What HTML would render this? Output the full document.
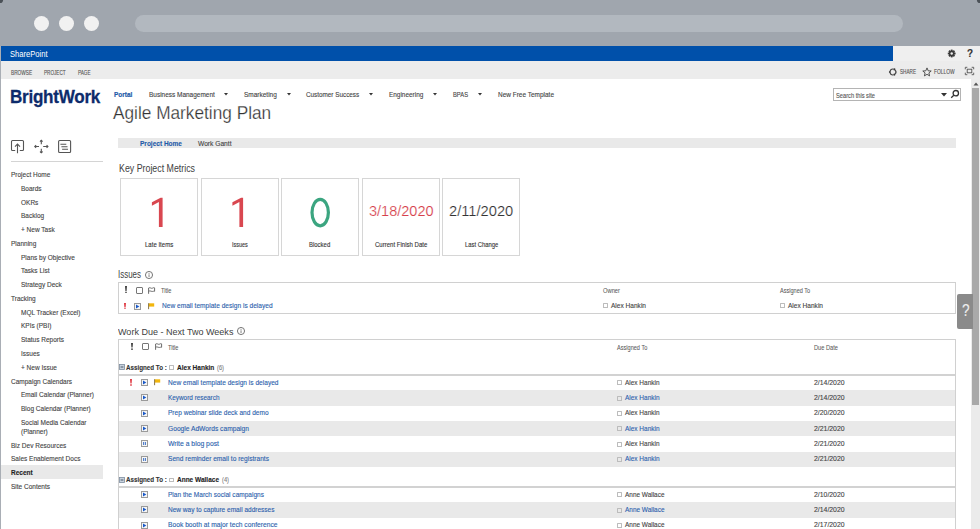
<!DOCTYPE html><html><head><meta charset="utf-8"><style>
*{margin:0;padding:0;box-sizing:border-box}
html,body{width:980px;height:529px;overflow:hidden;background:#fff;font-family:"Liberation Sans", sans-serif}
.t{position:absolute;line-height:1;white-space:nowrap;transform-origin:0 0;-webkit-text-stroke:0.12px currentColor}
.b{position:absolute;display:block}
</style></head><body><div class="b" style="left:0px;top:0px;width:980px;height:46px;background:#a0a6ae"></div><svg class="b" style="left:0px;top:0px;" width="6" height="6" viewBox="0 0 6 6"><path d="M0 0H3.1A3.1 3.1 0 0 1 0 3.1Z" fill="#4b5157"/></svg><svg class="b" style="left:974px;top:0px;" width="6" height="6" viewBox="0 0 6 6"><path d="M6 0H2.9A3.1 3.1 0 0 0 6 3.1Z" fill="#4b5157"/></svg><div class="b" style="left:0px;top:46px;width:1px;height:483px;background:#a9aeb5"></div><div class="b" style="left:34px;top:16px;width:15px;height:15px;background:#f1f1f1;border-radius:50%"></div><div class="b" style="left:59px;top:16px;width:15px;height:15px;background:#f1f1f1;border-radius:50%"></div><div class="b" style="left:84px;top:16px;width:15px;height:15px;background:#f1f1f1;border-radius:50%"></div><div class="b" style="left:135px;top:15px;width:768px;height:17px;background:#b2b8bf;border-radius:8.5px"></div><div class="b" style="left:1px;top:46px;width:892px;height:15px;background:#0050aa"></div><div class="b" style="left:893px;top:46px;width:87px;height:15px;background:#efefef"></div><div class="b" style="left:1px;top:61px;width:979px;height:18px;background:#ececec"></div><div class="b" style="left:971px;top:79px;width:9px;height:450px;background:#ebebeb"></div><div class="b" style="left:972px;top:88px;width:7px;height:317px;background:#a9a9a9"></div><svg class="b" style="left:973px;top:82px;" width="6" height="4" viewBox="0 0 6 4"><path d="M0.5 3.5L3 0.5L5.5 3.5Z" fill="#555"/></svg><svg class="b" style="left:946px;top:48px;" width="11" height="11" viewBox="0 0 11 11"><g transform="translate(5.7 5.5)" fill="#3a3a3a"><circle r="2.9"/><rect x="-0.9" y="-3.9" width="1.8" height="1.6" transform="rotate(0)"/><rect x="-0.9" y="-3.9" width="1.8" height="1.6" transform="rotate(45)"/><rect x="-0.9" y="-3.9" width="1.8" height="1.6" transform="rotate(90)"/><rect x="-0.9" y="-3.9" width="1.8" height="1.6" transform="rotate(135)"/><rect x="-0.9" y="-3.9" width="1.8" height="1.6" transform="rotate(180)"/><rect x="-0.9" y="-3.9" width="1.8" height="1.6" transform="rotate(225)"/><rect x="-0.9" y="-3.9" width="1.8" height="1.6" transform="rotate(270)"/><rect x="-0.9" y="-3.9" width="1.8" height="1.6" transform="rotate(315)"/><circle r="1.2" fill="#efefef"/></g></svg><svg class="b" style="left:888px;top:67px;" width="10" height="10" viewBox="0 0 10 10"><path d="M7.20 3.07A3.0 3.0 0 0 1 7.20 6.93M5.42 7.95A3.0 3.0 0 0 1 2.08 6.03M2.08 3.97A3.0 3.0 0 0 1 5.42 2.05" fill="none" stroke="#444" stroke-width="1.2"/><circle cx="6.40" cy="2.40" r="1.05" fill="#3a3a3a"/><circle cx="6.40" cy="7.60" r="1.05" fill="#3a3a3a"/><circle cx="1.90" cy="5.00" r="1.05" fill="#3a3a3a"/></svg><svg class="b" style="left:922px;top:67px;" width="10" height="10" viewBox="0 0 10 10"><path d="M5 0.9L6.2 3.8L9.2 4L6.9 5.9L7.6 8.9L5 7.3L2.4 8.9L3.1 5.9L0.8 4L3.8 3.8Z" fill="none" stroke="#444" stroke-width="0.9"/></svg><svg class="b" style="left:964px;top:66px;" width="11" height="10" viewBox="0 0 11 10"><g fill="none" stroke="#555" stroke-width="0.9"><path d="M1.3 3.3V1.3H3.3M7.7 1.3H9.7V3.3M9.7 6.7V8.7H7.7M3.3 8.7H1.3V6.7"/><rect x="3.2" y="3.2" width="4.6" height="3.6"/></g></svg><svg class="b" style="left:224px;top:92.7px;" width="4" height="3" viewBox="0 0 4 3"><path d="M0 0H4L2 2.4Z" fill="#333"/></svg><svg class="b" style="left:287px;top:92.7px;" width="4" height="3" viewBox="0 0 4 3"><path d="M0 0H4L2 2.4Z" fill="#333"/></svg><svg class="b" style="left:368.8px;top:92.7px;" width="4" height="3" viewBox="0 0 4 3"><path d="M0 0H4L2 2.4Z" fill="#333"/></svg><svg class="b" style="left:433px;top:92.7px;" width="4" height="3" viewBox="0 0 4 3"><path d="M0 0H4L2 2.4Z" fill="#333"/></svg><svg class="b" style="left:477.6px;top:92.7px;" width="4" height="3" viewBox="0 0 4 3"><path d="M0 0H4L2 2.4Z" fill="#333"/></svg><div class="b" style="left:833px;top:88px;width:128px;height:13px;border:1px solid #b4b4b4;background:#fff"></div><svg class="b" style="left:941px;top:93px;" width="6" height="4" viewBox="0 0 6 4"><path d="M0 0H6L3 3.5Z" fill="#333"/></svg><svg class="b" style="left:950px;top:89px;" width="10" height="10" viewBox="0 0 10 10"><g fill="none" stroke="#333" stroke-width="1.3"><circle cx="5.8" cy="4.2" r="2.7"/><path d="M3.8 6.2L1.2 8.8"/></g></svg><svg class="b" style="left:10px;top:139px;" width="15" height="15" viewBox="0 0 15 15"><g fill="none" stroke="#555" stroke-width="1.1"><path d="M5.2 11.5H2.5A1 1 0 0 1 1.5 10.5V2.5A1 1 0 0 1 2.5 1.5H12.5A1 1 0 0 1 13.5 2.5V10.5A1 1 0 0 1 12.5 11.5H9.8"/><path d="M7.5 14.2V5M5 7.6L7.5 5.1L10 7.6"/></g></svg><svg class="b" style="left:34px;top:139px;" width="15" height="15" viewBox="0 0 15 15"><g fill="none" stroke="#555" stroke-width="1.1"><path d="M7.3 1.3V5.3M7.3 9.7V13.8M0.8 7.5H5M9.2 7.5H13.9"/><path d="M6 2.6L7.3 1.3L8.6 2.6M6 12.5L7.3 13.8L8.6 12.5M2.1 6.2L0.8 7.5L2.1 8.8M12.6 6.2L13.9 7.5L12.6 8.8"/></g></svg><svg class="b" style="left:57px;top:139px;" width="15" height="15" viewBox="0 0 15 15"><g fill="none" stroke="#555" stroke-width="1.1"><rect x="1.6" y="1.5" width="12" height="12" rx="1"/><path d="M3.4 5.3H9.3M4.4 7.8H10.5M5.1 10.3H11"/></g></svg><div class="b" style="left:11px;top:161px;width:92px;height:1px;background:#d4d4d4"></div><div class="b" style="left:1px;top:465px;width:102px;height:14px;background:#e9e9e9"></div><div class="b" style="left:118px;top:138px;width:838px;height:10px;background:#e9e9e9"></div><div class="b" style="left:120px;top:178px;width:78px;height:78px;border:1px solid #d6d6d6;background:#fff"></div><div class="b" style="left:201px;top:178px;width:78px;height:78px;border:1px solid #d6d6d6;background:#fff"></div><div class="b" style="left:281px;top:178px;width:78px;height:78px;border:1px solid #d6d6d6;background:#fff"></div><div class="b" style="left:362px;top:178px;width:78px;height:78px;border:1px solid #d6d6d6;background:#fff"></div><div class="b" style="left:442px;top:178px;width:78px;height:78px;border:1px solid #d6d6d6;background:#fff"></div><svg class="b" style="left:0px;top:0px;pointer-events:none" width="980" height="260" viewBox="0 0 980 260"><path d="M151.9 202.3L160.6 197.7H162.6V227H158.9V202.1L151.9 205.8Z" fill="#d94750"/></svg><svg class="b" style="left:0px;top:0px;pointer-events:none" width="980" height="260" viewBox="0 0 980 260"><path d="M232.4 202.3L241.1 197.7H243.1V227H239.4V202.1L232.4 205.8Z" fill="#d94750"/></svg><svg class="b" style="left:300px;top:190px;" width="40" height="45" viewBox="0 0 40 45"><ellipse cx="20.2" cy="22.6" rx="8.2" ry="13.2" fill="none" stroke="#3ba580" stroke-width="3.2"/></svg><svg class="b" style="left:144.1px;top:270.2px;" width="10" height="10" viewBox="0 0 10 10"><circle cx="5" cy="5" r="3.55" fill="none" stroke="#6e6e6e" stroke-width="0.95"/><rect x="4.6" y="4.3" width="0.85" height="2.7" fill="#6e6e6e"/><rect x="4.6" y="2.9" width="0.85" height="0.9" fill="#6e6e6e"/></svg><div class="b" style="left:118px;top:282px;width:838px;height:32px;border:1px solid #d0d0d0;background:#fff"></div><svg class="b" style="left:124.7px;top:286.2px;" width="2" height="7.3" viewBox="0 0 2 7.3"><path d="M0 0H2L1.6 4.90H0.4Z" fill="#444"/><rect x="0.25" y="5.70" width="1.5" height="1.6" fill="#444"/></svg><div class="b" style="left:135.5px;top:287px;width:7px;height:7px;border:1px solid #777;border-radius:1px"></div><svg class="b" style="left:148.2px;top:287px;" width="8" height="7" viewBox="0 0 8 7"><path d="M0.6 6.8V1C2 0 3.2 1.8 4.4 1.2S6 0.4 6.6 0.9V4.3C6 3.8 5 4.7 3.8 4.4S1.6 3.6 0.6 4.3" fill="none" stroke="#6a6a6a" stroke-width="1"/></svg><svg class="b" style="left:123.6px;top:302.6px;" width="2" height="6.8" viewBox="0 0 2 6.8"><path d="M0 0H2L1.6 4.40H0.4Z" fill="#e03a44"/><rect x="0.25" y="5.20" width="1.5" height="1.6" fill="#e03a44"/></svg><svg class="b" style="left:134.2px;top:302.5px;" width="7" height="7" viewBox="0 0 7 7"><rect x="0.5" y="0.5" width="6" height="6" fill="#f6f6f6" stroke="#9a9a9a" stroke-width="1"/><path d="M2 1.5L5.3 3.5L2 5.5Z" fill="#1858c8"/></svg><svg class="b" style="left:147.8px;top:303.0px;" width="7" height="7" viewBox="0 0 7 7"><path d="M1 0.3H6.2V3.6H1Z" fill="#f2b60c"/><path d="M0.6 0.2V6.2" stroke="#8a7440" stroke-width="1"/></svg><div class="b" style="left:603.2px;top:303.1px;width:5px;height:5px;border:1px solid #bcbcbc;border-radius:0.5px"></div><div class="b" style="left:780.4px;top:303.1px;width:5px;height:5px;border:1px solid #bcbcbc;border-radius:0.5px"></div><svg class="b" style="left:236.1px;top:326.4px;" width="10" height="10" viewBox="0 0 10 10"><circle cx="5" cy="5" r="3.55" fill="none" stroke="#6e6e6e" stroke-width="0.95"/><rect x="4.6" y="4.3" width="0.85" height="2.7" fill="#6e6e6e"/><rect x="4.6" y="2.9" width="0.85" height="0.9" fill="#6e6e6e"/></svg><div class="b" style="left:118px;top:339px;width:838px;height:200px;border:1px solid #d0d0d0;border-bottom:none;background:#fff"></div><svg class="b" style="left:131.2px;top:343.2px;" width="2" height="7.0" viewBox="0 0 2 7.0"><path d="M0 0H2L1.6 4.60H0.4Z" fill="#444"/><rect x="0.25" y="5.40" width="1.5" height="1.6" fill="#444"/></svg><div class="b" style="left:141.8px;top:343.4px;width:7px;height:7px;border:1px solid #777;border-radius:1px"></div><svg class="b" style="left:155px;top:343.4px;" width="8" height="7" viewBox="0 0 8 7"><path d="M0.6 6.8V1C2 0 3.2 1.8 4.4 1.2S6 0.4 6.6 0.9V4.3C6 3.8 5 4.7 3.8 4.4S1.6 3.6 0.6 4.3" fill="none" stroke="#6a6a6a" stroke-width="1"/></svg><svg class="b" style="left:119px;top:364.4px;" width="6" height="6" viewBox="0 0 6 6"><rect x="0.5" y="0.5" width="5" height="5" fill="#c9d3de" stroke="#7d8da0" stroke-width="0.8"/><path d="M1.6 3H4.4" stroke="#3c4a5c" stroke-width="0.9"/></svg><div class="b" style="left:169.2px;top:365.2px;width:4.8px;height:4.8px;border:1px solid #bcbcbc;border-radius:0.5px"></div><div class="b" style="left:119px;top:374px;width:836px;height:2px;background:#d2d2d2"></div><svg class="b" style="left:130.4px;top:379.1px;" width="2" height="6.8" viewBox="0 0 2 6.8"><path d="M0 0H2L1.6 4.40H0.4Z" fill="#e03a44"/><rect x="0.25" y="5.20" width="1.5" height="1.6" fill="#e03a44"/></svg><svg class="b" style="left:154.4px;top:379.3px;" width="7" height="7" viewBox="0 0 7 7"><path d="M1 0.3H6.2V3.6H1Z" fill="#f2b60c"/><path d="M0.6 0.2V6.2" stroke="#8a7440" stroke-width="1"/></svg><svg class="b" style="left:141.1px;top:379.1px;" width="7" height="7" viewBox="0 0 7 7"><rect x="0.5" y="0.5" width="6" height="6" fill="#f6f6f6" stroke="#9a9a9a" stroke-width="1"/><path d="M2 1.5L5.3 3.5L2 5.5Z" fill="#1858c8"/></svg><div class="b" style="left:617.0px;top:380.40000000000003px;width:5px;height:5px;border:1px solid #bcbcbc;border-radius:0.5px"></div><div class="b" style="left:119px;top:390.33px;width:836px;height:15.33px;background:#e9e9e9"></div><svg class="b" style="left:141.1px;top:394.43300000000005px;" width="7" height="7" viewBox="0 0 7 7"><rect x="0.5" y="0.5" width="6" height="6" fill="#f6f6f6" stroke="#9a9a9a" stroke-width="1"/><path d="M2 1.5L5.3 3.5L2 5.5Z" fill="#1858c8"/></svg><div class="b" style="left:617.0px;top:395.73300000000006px;width:5px;height:5px;border:1px solid #bcbcbc;border-radius:0.5px"></div><svg class="b" style="left:141.1px;top:409.766px;" width="7" height="7" viewBox="0 0 7 7"><rect x="0.5" y="0.5" width="6" height="6" fill="#f6f6f6" stroke="#9a9a9a" stroke-width="1"/><path d="M2 1.5L5.3 3.5L2 5.5Z" fill="#1858c8"/></svg><div class="b" style="left:617.0px;top:411.06600000000003px;width:5px;height:5px;border:1px solid #bcbcbc;border-radius:0.5px"></div><div class="b" style="left:119px;top:421.0px;width:836px;height:15.33px;background:#e9e9e9"></div><svg class="b" style="left:141.1px;top:425.09900000000005px;" width="7" height="7" viewBox="0 0 7 7"><rect x="0.5" y="0.5" width="6" height="6" fill="#f6f6f6" stroke="#9a9a9a" stroke-width="1"/><path d="M2 1.5L5.3 3.5L2 5.5Z" fill="#1858c8"/></svg><div class="b" style="left:617.0px;top:426.39900000000006px;width:5px;height:5px;border:1px solid #bcbcbc;border-radius:0.5px"></div><svg class="b" style="left:141.1px;top:440.432px;" width="7" height="7" viewBox="0 0 7 7"><rect x="0.5" y="0.5" width="6" height="6" fill="#f6f6f6" stroke="#9a9a9a" stroke-width="1"/><rect x="2.2" y="2" width="0.9" height="3" fill="#2a62c0"/><rect x="3.9" y="2" width="0.9" height="3" fill="#2a62c0"/></svg><div class="b" style="left:617.0px;top:441.732px;width:5px;height:5px;border:1px solid #bcbcbc;border-radius:0.5px"></div><div class="b" style="left:119px;top:451.67px;width:836px;height:15.33px;background:#e9e9e9"></div><svg class="b" style="left:141.1px;top:455.76500000000004px;" width="7" height="7" viewBox="0 0 7 7"><rect x="0.5" y="0.5" width="6" height="6" fill="#f6f6f6" stroke="#9a9a9a" stroke-width="1"/><rect x="2.2" y="2" width="0.9" height="3" fill="#2a62c0"/><rect x="3.9" y="2" width="0.9" height="3" fill="#2a62c0"/></svg><div class="b" style="left:617.0px;top:457.06500000000005px;width:5px;height:5px;border:1px solid #bcbcbc;border-radius:0.5px"></div><svg class="b" style="left:119px;top:476.7px;" width="6" height="6" viewBox="0 0 6 6"><rect x="0.5" y="0.5" width="5" height="5" fill="#c9d3de" stroke="#7d8da0" stroke-width="0.8"/><path d="M1.6 3H4.4" stroke="#3c4a5c" stroke-width="0.9"/></svg><div class="b" style="left:169.2px;top:477.5px;width:4.8px;height:4.8px;border:1px solid #bcbcbc;border-radius:0.5px"></div><div class="b" style="left:119px;top:486px;width:836px;height:2px;background:#d2d2d2"></div><svg class="b" style="left:141.1px;top:491.0px;" width="7" height="7" viewBox="0 0 7 7"><rect x="0.5" y="0.5" width="6" height="6" fill="#f6f6f6" stroke="#9a9a9a" stroke-width="1"/><path d="M2 1.5L5.3 3.5L2 5.5Z" fill="#1858c8"/></svg><div class="b" style="left:617.0px;top:492.3px;width:5px;height:5px;border:1px solid #bcbcbc;border-radius:0.5px"></div><div class="b" style="left:119px;top:502.23px;width:836px;height:15.33px;background:#e9e9e9"></div><svg class="b" style="left:141.1px;top:506.333px;" width="7" height="7" viewBox="0 0 7 7"><rect x="0.5" y="0.5" width="6" height="6" fill="#f6f6f6" stroke="#9a9a9a" stroke-width="1"/><path d="M2 1.5L5.3 3.5L2 5.5Z" fill="#1858c8"/></svg><div class="b" style="left:617.0px;top:507.63300000000004px;width:5px;height:5px;border:1px solid #bcbcbc;border-radius:0.5px"></div><svg class="b" style="left:141.1px;top:521.666px;" width="7" height="7" viewBox="0 0 7 7"><rect x="0.5" y="0.5" width="6" height="6" fill="#f6f6f6" stroke="#9a9a9a" stroke-width="1"/><path d="M2 1.5L5.3 3.5L2 5.5Z" fill="#1858c8"/></svg><div class="b" style="left:617.0px;top:522.966px;width:5px;height:5px;border:1px solid #bcbcbc;border-radius:0.5px"></div><div class="b" style="left:957px;top:294px;width:15.5px;height:35px;background:#8a8a8a;border-radius:2px 0 0 2px"></div><div class="t" id="sp" style="left:10.30px;top:49.83px;font-size:8.43px;color:#fff;font-weight:400;transform:scaleX(0.9023);-webkit-text-stroke:0;">SharePoint</div><div class="t" id="browse" style="left:11.00px;top:69.92px;font-size:6.69px;color:#555;font-weight:400;transform:scaleX(0.7096);">BROWSE</div><div class="t" id="project" style="left:44.00px;top:69.92px;font-size:6.69px;color:#555;font-weight:400;transform:scaleX(0.6919);">PROJECT</div><div class="t" id="page" style="left:77.50px;top:69.92px;font-size:6.69px;color:#555;font-weight:400;transform:scaleX(0.6908);">PAGE</div><div class="t" id="share" style="left:899.60px;top:69.32px;font-size:6.69px;color:#555;font-weight:400;transform:scaleX(0.6942);">SHARE</div><div class="t" id="follow" style="left:934.00px;top:69.32px;font-size:6.69px;color:#555;font-weight:400;transform:scaleX(0.7292);">FOLLOW</div><div class="t" id="qm" style="left:967.00px;top:48.46px;font-size:10.76px;color:#333;font-weight:700;transform:scaleX(0.9200);">?</div><div class="t" id="logo" style="left:9.80px;top:86.59px;font-size:19.19px;color:#0d2b6b;font-weight:700;transform:scaleX(0.8901);letter-spacing:-0.3px;-webkit-text-stroke:0.3px currentColor;">BrightWork</div><div class="t" id="portal" style="left:113.80px;top:91.45px;font-size:7.70px;color:#1e5aa8;font-weight:700;transform:scaleX(0.8442);-webkit-text-stroke:0.2px currentColor;">Portal</div><div class="t" id="n1" style="left:148.60px;top:91.95px;font-size:7.12px;color:#444;font-weight:400;transform:scaleX(0.9097);">Business Management</div><div class="t" id="n2" style="left:244.00px;top:91.95px;font-size:7.12px;color:#444;font-weight:400;transform:scaleX(0.9119);">Smarketing</div><div class="t" id="n3" style="left:306.00px;top:91.95px;font-size:7.12px;color:#444;font-weight:400;transform:scaleX(0.8915);">Customer Success</div><div class="t" id="n4" style="left:388.70px;top:91.95px;font-size:7.12px;color:#444;font-weight:400;transform:scaleX(0.9037);">Engineering</div><div class="t" id="n5" style="left:453.00px;top:91.95px;font-size:7.12px;color:#444;font-weight:400;transform:scaleX(0.8129);">BPAS</div><div class="t" id="n6" style="left:497.50px;top:91.95px;font-size:7.12px;color:#444;font-weight:400;transform:scaleX(0.9103);">New Free Template</div><div class="t" id="title" style="left:112.90px;top:104.36px;font-size:18.17px;color:#333;font-weight:400;transform:scaleX(0.9500);-webkit-text-stroke:0.25px #fff;">Agile Marketing Plan</div><div class="t" id="search" style="left:836.30px;top:92.52px;font-size:6.69px;color:#555;font-weight:400;transform:scaleX(0.8530);">Search this site</div><div class="t" id="side0" style="left:11.00px;top:171.02px;font-size:7.27px;color:#444;font-weight:400;transform:scaleX(0.8950);">Project Home</div><div class="t" id="side1" style="left:21.10px;top:184.79px;font-size:7.27px;color:#444;font-weight:400;transform:scaleX(0.8950);">Boards</div><div class="t" id="side2" style="left:21.10px;top:198.56px;font-size:7.27px;color:#444;font-weight:400;transform:scaleX(0.8950);">OKRs</div><div class="t" id="side3" style="left:21.10px;top:212.33px;font-size:7.27px;color:#444;font-weight:400;transform:scaleX(0.8950);">Backlog</div><div class="t" id="side4" style="left:21.10px;top:226.10px;font-size:7.27px;color:#444;font-weight:400;transform:scaleX(0.8950);">+ New Task</div><div class="t" id="side5" style="left:11.00px;top:239.87px;font-size:7.27px;color:#444;font-weight:400;transform:scaleX(0.8950);">Planning</div><div class="t" id="side6" style="left:21.10px;top:253.64px;font-size:7.27px;color:#444;font-weight:400;transform:scaleX(0.8950);">Plans by Objective</div><div class="t" id="side7" style="left:21.10px;top:267.41px;font-size:7.27px;color:#444;font-weight:400;transform:scaleX(0.8950);">Tasks List</div><div class="t" id="side8" style="left:21.10px;top:281.18px;font-size:7.27px;color:#444;font-weight:400;transform:scaleX(0.8950);">Strategy Deck</div><div class="t" id="side9" style="left:11.00px;top:294.95px;font-size:7.27px;color:#444;font-weight:400;transform:scaleX(0.8950);">Tracking</div><div class="t" id="side10" style="left:21.10px;top:308.72px;font-size:7.27px;color:#444;font-weight:400;transform:scaleX(0.8950);">MQL Tracker (Excel)</div><div class="t" id="side11" style="left:21.10px;top:322.49px;font-size:7.27px;color:#444;font-weight:400;transform:scaleX(0.8950);">KPIs (PBI)</div><div class="t" id="side12" style="left:21.10px;top:336.26px;font-size:7.27px;color:#444;font-weight:400;transform:scaleX(0.8950);">Status Reports</div><div class="t" id="side13" style="left:21.10px;top:350.03px;font-size:7.27px;color:#444;font-weight:400;transform:scaleX(0.8950);">Issues</div><div class="t" id="side14" style="left:21.10px;top:363.80px;font-size:7.27px;color:#444;font-weight:400;transform:scaleX(0.8950);">+ New Issue</div><div class="t" id="side15" style="left:11.00px;top:377.57px;font-size:7.27px;color:#444;font-weight:400;transform:scaleX(0.8950);">Campaign Calendars</div><div class="t" id="side16" style="left:21.10px;top:391.34px;font-size:7.27px;color:#444;font-weight:400;transform:scaleX(0.8950);">Email Calendar (Planner)</div><div class="t" id="side17" style="left:21.10px;top:405.11px;font-size:7.27px;color:#444;font-weight:400;transform:scaleX(0.8950);">Blog Calendar (Planner)</div><div class="t" id="side18" style="left:21.10px;top:418.88px;font-size:7.27px;color:#444;font-weight:400;transform:scaleX(0.8950);">Social Media Calendar</div><div class="t" id="side_planner" style="left:21.10px;top:428.02px;font-size:7.27px;color:#444;font-weight:400;transform:scaleX(0.8950);">(Planner)</div><div class="t" id="sideb0" style="left:11.00px;top:441.62px;font-size:7.27px;color:#444;font-weight:400;transform:scaleX(0.8950);">Biz Dev Resources</div><div class="t" id="sideb1" style="left:11.00px;top:455.22px;font-size:7.27px;color:#444;font-weight:400;transform:scaleX(0.8950);">Sales Enablement Docs</div><div class="t" id="sideb2" style="left:11.00px;top:468.82px;font-size:7.27px;color:#222;font-weight:700;transform:scaleX(0.8950);">Recent</div><div class="t" id="sideb3" style="left:11.00px;top:482.82px;font-size:7.27px;color:#444;font-weight:400;transform:scaleX(0.8950);">Site Contents</div><div class="t" id="tab1" style="left:139.60px;top:140.18px;font-size:7.56px;color:#1e5aa8;font-weight:700;transform:scaleX(0.8632);">Project Home</div><div class="t" id="tab2" style="left:198.00px;top:140.18px;font-size:7.56px;color:#444;font-weight:400;transform:scaleX(0.8809);">Work Gantt</div><div class="t" id="h_kpm" style="left:118.60px;top:163.95px;font-size:10.17px;color:#404040;font-weight:400;transform:scaleX(0.8687);-webkit-text-stroke:0;">Key Project Metrics</div><div class="t" id="lab0" style="left:144.60px;top:241.55px;font-size:7.12px;color:#333;font-weight:400;transform:scaleX(0.8493);">Late Items</div><div class="t" id="lab1" style="left:231.70px;top:241.55px;font-size:7.12px;color:#333;font-weight:400;transform:scaleX(0.7684);">Issues</div><div class="t" id="lab2" style="left:309.40px;top:241.55px;font-size:7.12px;color:#333;font-weight:400;transform:scaleX(0.8380);">Blocked</div><div class="t" id="lab3" style="left:374.50px;top:241.55px;font-size:7.12px;color:#333;font-weight:400;transform:scaleX(0.8485);">Current Finish Date</div><div class="t" id="lab4" style="left:464.50px;top:241.55px;font-size:7.12px;color:#333;font-weight:400;transform:scaleX(0.8232);">Last Change</div><div class="t" id="d1" style="left:368.60px;top:204.07px;font-size:14.97px;color:#d6404b;font-weight:400;transform:scaleX(0.9701);-webkit-text-stroke:0.2px #fff;">3/18/2020</div><div class="t" id="d2" style="left:449.20px;top:204.07px;font-size:14.97px;color:#333;font-weight:400;transform:scaleX(0.9819);-webkit-text-stroke:0.2px #fff;">2/11/2020</div><div class="t" id="h_issues" style="left:118.30px;top:270.48px;font-size:10.03px;color:#404040;font-weight:400;transform:scaleX(0.7944);-webkit-text-stroke:0;">Issues</div><div class="t" id="i_title" style="left:161.20px;top:287.79px;font-size:6.83px;color:#585858;font-weight:400;transform:scaleX(0.8296);-webkit-text-stroke:0.05px currentColor;">Title</div><div class="t" id="i_owner" style="left:602.70px;top:287.79px;font-size:6.83px;color:#585858;font-weight:400;transform:scaleX(0.8447);-webkit-text-stroke:0.05px currentColor;">Owner</div><div class="t" id="i_asg" style="left:780.00px;top:287.79px;font-size:6.83px;color:#585858;font-weight:400;transform:scaleX(0.8145);-webkit-text-stroke:0.05px currentColor;">Assigned To</div><div class="t" id="i_r1" style="left:161.60px;top:301.82px;font-size:7.27px;color:#2b5fad;font-weight:400;transform:scaleX(0.9068);">New email template design is delayed</div><div class="t" id="i_o1" style="left:611.20px;top:301.82px;font-size:7.27px;color:#444;font-weight:400;transform:scaleX(0.9025);">Alex Hankin</div><div class="t" id="i_a1" style="left:788.00px;top:301.82px;font-size:7.27px;color:#444;font-weight:400;transform:scaleX(0.9025);">Alex Hankin</div><div class="t" id="h_wd" style="left:118.30px;top:327.20px;font-size:9.88px;color:#404040;font-weight:400;transform:scaleX(0.9142);-webkit-text-stroke:0;">Work Due - Next Two Weeks</div><div class="t" id="w_title" style="left:168.00px;top:344.99px;font-size:6.83px;color:#585858;font-weight:400;transform:scaleX(0.8296);-webkit-text-stroke:0.05px currentColor;">Title</div><div class="t" id="w_asg" style="left:616.70px;top:344.99px;font-size:6.83px;color:#585858;font-weight:400;transform:scaleX(0.8172);-webkit-text-stroke:0.05px currentColor;">Assigned To</div><div class="t" id="w_due" style="left:814.10px;top:344.99px;font-size:6.83px;color:#585858;font-weight:400;transform:scaleX(0.8316);-webkit-text-stroke:0.05px currentColor;">Due Date</div><div class="t" id="Ag1" style="left:126.30px;top:363.72px;font-size:7.27px;color:#333;font-weight:700;transform:scaleX(0.8589);">Assigned To :</div><div class="t" id="Ag2" style="left:177.20px;top:363.72px;font-size:7.27px;color:#222;font-weight:700;transform:scaleX(0.8968);">Alex Hankin</div><div class="t" id="Ag3" style="left:216.90px;top:364.52px;font-size:6.69px;color:#808080;font-weight:400;transform:scaleX(0.8500);">(6)</div><div class="t" id="At0" style="left:168.20px;top:378.82px;font-size:7.27px;color:#2b5fad;font-weight:400;transform:scaleX(0.9060);">New email template design is delayed</div><div class="t" id="Aa0" style="left:625.20px;top:378.82px;font-size:7.27px;color:#444;font-weight:400;transform:scaleX(0.8896);">Alex Hankin</div><div class="t" id="Ad0" style="left:814.10px;top:378.82px;font-size:7.27px;color:#444;font-weight:400;transform:scaleX(0.9465);">2/14/2020</div><div class="t" id="At1" style="left:168.20px;top:394.16px;font-size:7.27px;color:#2b5fad;font-weight:400;transform:scaleX(0.8794);">Keyword research</div><div class="t" id="Aa1" style="left:625.20px;top:394.16px;font-size:7.27px;color:#2b5fad;font-weight:400;transform:scaleX(0.8896);">Alex Hankin</div><div class="t" id="Ad1" style="left:814.10px;top:394.16px;font-size:7.27px;color:#444;font-weight:400;transform:scaleX(0.9465);">2/14/2020</div><div class="t" id="At2" style="left:168.20px;top:409.49px;font-size:7.27px;color:#2b5fad;font-weight:400;transform:scaleX(0.9024);">Prep webinar slide deck and demo</div><div class="t" id="Aa2" style="left:625.20px;top:409.49px;font-size:7.27px;color:#444;font-weight:400;transform:scaleX(0.8896);">Alex Hankin</div><div class="t" id="Ad2" style="left:814.10px;top:409.49px;font-size:7.27px;color:#444;font-weight:400;transform:scaleX(0.9465);">2/20/2020</div><div class="t" id="At3" style="left:168.20px;top:424.82px;font-size:7.27px;color:#2b5fad;font-weight:400;transform:scaleX(0.9170);">Google AdWords campaign</div><div class="t" id="Aa3" style="left:625.20px;top:424.82px;font-size:7.27px;color:#2b5fad;font-weight:400;transform:scaleX(0.8896);">Alex Hankin</div><div class="t" id="Ad3" style="left:814.10px;top:424.82px;font-size:7.27px;color:#444;font-weight:400;transform:scaleX(0.9465);">2/21/2020</div><div class="t" id="At4" style="left:168.20px;top:440.15px;font-size:7.27px;color:#2b5fad;font-weight:400;transform:scaleX(0.9377);">Write a blog post</div><div class="t" id="Aa4" style="left:625.20px;top:440.15px;font-size:7.27px;color:#444;font-weight:400;transform:scaleX(0.8896);">Alex Hankin</div><div class="t" id="Ad4" style="left:814.10px;top:440.15px;font-size:7.27px;color:#444;font-weight:400;transform:scaleX(0.9465);">2/21/2020</div><div class="t" id="At5" style="left:168.20px;top:455.49px;font-size:7.27px;color:#2b5fad;font-weight:400;transform:scaleX(0.9094);">Send reminder email to registrants</div><div class="t" id="Aa5" style="left:625.20px;top:455.49px;font-size:7.27px;color:#2b5fad;font-weight:400;transform:scaleX(0.8896);">Alex Hankin</div><div class="t" id="Ad5" style="left:814.10px;top:455.49px;font-size:7.27px;color:#444;font-weight:400;transform:scaleX(0.9465);">2/21/2020</div><div class="t" id="Bg1" style="left:126.30px;top:476.02px;font-size:7.27px;color:#333;font-weight:700;transform:scaleX(0.8589);">Assigned To :</div><div class="t" id="Bg2" style="left:177.20px;top:476.02px;font-size:7.27px;color:#222;font-weight:700;transform:scaleX(0.8939);">Anne Wallace</div><div class="t" id="Bg3" style="left:221.60px;top:476.82px;font-size:6.69px;color:#808080;font-weight:400;transform:scaleX(0.8500);">(4)</div><div class="t" id="Bt0" style="left:168.20px;top:490.72px;font-size:7.27px;color:#2b5fad;font-weight:400;transform:scaleX(0.9004);">Plan the March social campaigns</div><div class="t" id="Ba0" style="left:625.20px;top:490.72px;font-size:7.27px;color:#444;font-weight:400;transform:scaleX(0.8864);">Anne Wallace</div><div class="t" id="Bd0" style="left:814.10px;top:490.72px;font-size:7.27px;color:#444;font-weight:400;transform:scaleX(0.9465);">2/10/2020</div><div class="t" id="Bt1" style="left:168.20px;top:506.06px;font-size:7.27px;color:#2b5fad;font-weight:400;transform:scaleX(0.8970);">New way to capture email addresses</div><div class="t" id="Ba1" style="left:625.20px;top:506.06px;font-size:7.27px;color:#2b5fad;font-weight:400;transform:scaleX(0.8864);">Anne Wallace</div><div class="t" id="Bd1" style="left:814.10px;top:506.06px;font-size:7.27px;color:#444;font-weight:400;transform:scaleX(0.9465);">2/14/2020</div><div class="t" id="Bt2" style="left:168.20px;top:521.39px;font-size:7.27px;color:#2b5fad;font-weight:400;transform:scaleX(0.9221);">Book booth at major tech conference</div><div class="t" id="Ba2" style="left:625.20px;top:521.39px;font-size:7.27px;color:#444;font-weight:400;transform:scaleX(0.8864);">Anne Wallace</div><div class="t" id="Bd2" style="left:814.10px;top:521.39px;font-size:7.27px;color:#444;font-weight:400;transform:scaleX(0.9465);">2/17/2020</div><div class="t" id="help" style="left:961.80px;top:303.31px;font-size:15.99px;color:#eeeeee;font-weight:400;transform:scaleX(0.8500);">?</div></body></html>
